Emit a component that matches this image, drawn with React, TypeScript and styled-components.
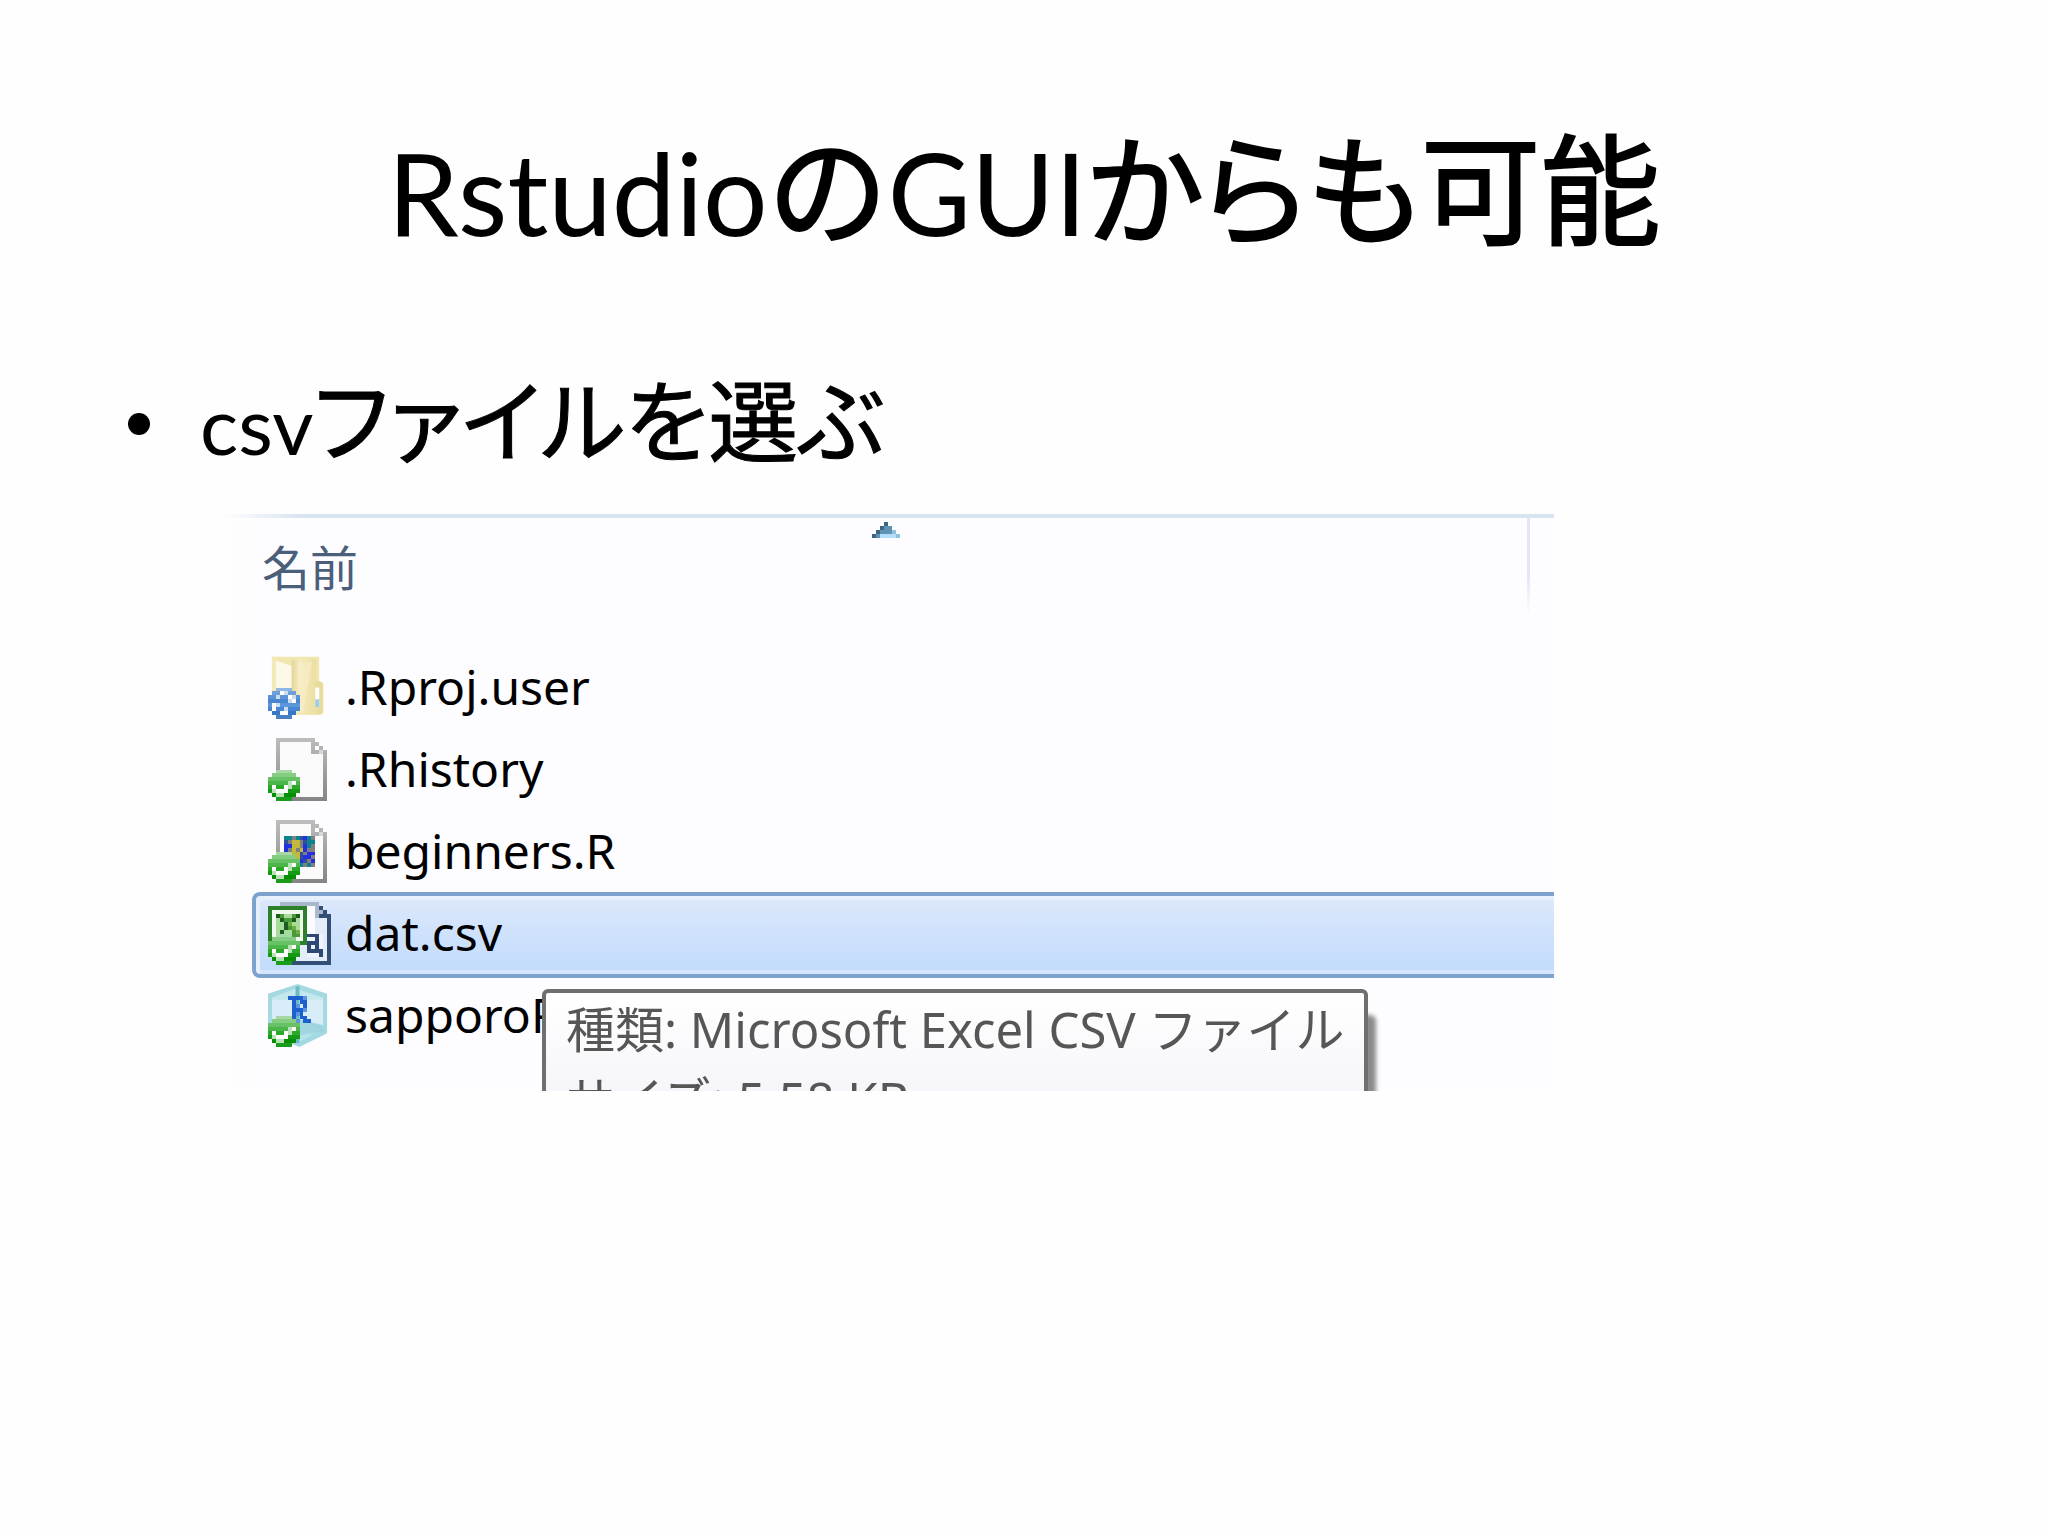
import React from "react";
import styled, { createGlobalStyle } from "styled-components";

const GlobalStyle = createGlobalStyle`
  * {
    box-sizing: border-box;
  }
  body {
    margin: 0;
    background: #fefefe;
    color: #000;
    font-family: Lato, "Noto Sans CJK JP", sans-serif;
  }
`;

const Slide = styled.main`
  display: flex;
  flex-direction: column;
  align-items: stretch;
  padding: 96px 120px 96px;
`;

const Title = styled.h1`
  margin: 0;
  text-align: center;
  font-size: 114px;
  font-weight: 400;
  line-height: 192px;
  white-space: nowrap;
`;

const Japanese = styled.span<{ $size: number; $fullWidth?: boolean }>`
  font-family: "Noto Sans CJK JP", sans-serif;
  font-size: ${(p) => p.$size}px;
  font-weight: 400;
  font-feature-settings: ${(p) => (p.$fullWidth ? "normal" : '"palt"')};
  line-height: 1;
  -webkit-text-stroke: ${(p) => (p.$size > 100 ? 2 : 1)}px currentColor;
`;

const Points = styled.ul`
  list-style: none;
  margin: 64px 0 0;
  padding: 0;
`;

const Point = styled.li`
  display: flex;
  align-items: center;
  gap: 50px;
  padding-left: 8px;
  font-size: 80px;
  line-height: 144px;
  white-space: nowrap;
`;

const Bullet = styled.span`
  width: 22px;
  height: 22px;
  border-radius: 50%;
  background: #000;
`;

const Explorer = styled.section`
  position: relative;
  width: 1330px;
  max-width: 100%;
  height: 577px;
  margin: 18px 0 0 104px;
  overflow: hidden;
  background: linear-gradient(90deg, #fefefe, #fdfcfe 32px);
  font-family: "Noto Sans", "Noto Sans CJK JP", sans-serif;
  font-size: 48px;
`;

const Header = styled.header`
  display: flex;
  align-items: flex-start;
  height: 134px;
  border-top: 4px solid;
  border-image: linear-gradient(90deg, #fefefe, #d9e4f1 80px) 1;
  border-right: 0;
  border-left: 0;
  border-bottom: 0;
`;

const NameColumn = styled.button`
  position: relative;
  flex: 1;
  height: 96px;
  margin: 0;
  padding: 4px 0 0 38px;
  border: 0;
  background: none;
  color: #4b5f7b;
  font: inherit;
  line-height: 80px;
  text-align: left;
`;

const Divider = styled.span`
  width: 3px;
  height: 96px;
  margin-right: 24px;
  background: linear-gradient(#e2e6f5 60%, #fdfcfe);
`;

const SortMark = styled.svg`
  position: absolute;
  top: 4px;
  left: 648px;
  width: 28px;
  height: 16px;
`;

const Files = styled.ul`
  list-style: none;
  margin: 0;
  padding: 0 0 0 28px;
`;

const File = styled.button<{ $selected?: boolean }>`
  display: flex;
  align-items: center;
  gap: 14px;
  width: 100%;
  height: ${(p) => (p.$selected ? 86 : 82)}px;
  margin: ${(p) => (p.$selected ? "-2px 0" : "0")};
  padding: 0 0 4px 12px;
  border: 4px solid ${(p) => (p.$selected ? "#7da2ce" : "transparent")};
  border-right: 0;
  border-radius: 8px 0 0 8px;
  background: ${(p) =>
    p.$selected ? "linear-gradient(#dce8fb, #c1dbfc)" : "none"};
  box-shadow: ${(p) =>
    p.$selected ? "inset 4px 4px #e6effc, inset 0 -4px #d5e6fd" : "none"};
  color: #000;
  font: inherit;
  line-height: 72px;
  text-align: left;
`;

const Icon = styled.svg`
  flex: none;
  width: 63px;
  height: 63px;
`;

const Tooltip = styled.div`
  position: absolute;
  top: 475px;
  left: 318px;
  width: 826px;
  padding: 1px 20px;
  border: 4px solid #6f6f6f;
  border-radius: 6px;
  background: linear-gradient(#fff, #f2f2f8);
  box-shadow: 8px 26px 4px 0 #8c8c8c;
  color: #565656;
  font-size: 49px;
  line-height: 70px;
  white-space: nowrap;
`;

const TooltipLine = styled.p`
  margin: 0;
`;

type Palette = Record<string, string>;

function Pixels({
  rows,
  palette,
  x = 0,
  y = 0,
}: {
  rows: string[];
  palette: Palette;
  x?: number;
  y?: number;
}) {
  return (
    <g shapeRendering="crispEdges">
      {rows.flatMap((row, j) =>
        [...row].map((c, i) =>
          palette[c] ? (
            <rect
              key={`${i}-${j}`}
              x={x + i}
              y={y + j}
              width="1"
              height="1"
              fill={palette[c]}
            />
          ) : null
        )
      )}
    </g>
  );
}

const GREEN = ["#a5d8a3", "#86cd84", "#67c165", "#4cb54a", "#2ba72a", "#149a13", "#068f05", "#1c9c1b"];
const BLUE = ["#8fb6e2", "#6f9fdb", "#5c93d6", "#4a86cf", "#5c96da", "#4786d2", "#3677c6", "#4a80c4"];
const CHECK = ["..####..", ".######.", "########", "#####vw#", "#w##wv##", "#vwww###", ".#vv###.", "..####.."];
const SYNC = ["..####..", ".##wv##.", "##v##wv#", "#####vw#", "#wv#####", "#w##v###", ".##ww##.", "..####.."];

function Badge({
  colors,
  rows,
  tint,
}: {
  colors: string[];
  rows: string[];
  tint: string;
}) {
  return (
    <>
      {rows.map((row, j) => (
        <Pixels
          key={j}
          rows={[row]}
          y={8 + j}
          palette={{ "#": colors[j], w: "#fff", v: tint }}
        />
      ))}
    </>
  );
}

const SyncedBadge = () => <Badge colors={GREEN} rows={CHECK} tint="#b9e2b8" />;
const SyncingBadge = () => <Badge colors={BLUE} rows={SYNC} tint="#c9def5" />;

function Page() {
  return (
    <>
      <defs>
        <linearGradient id="edge" x1="0" y1="0" x2="0" y2="1">
          <stop offset="0" stopColor="#bdbdbd" />
          <stop offset="1" stopColor="#848484" />
        </linearGradient>
      </defs>
      <g shapeRendering="crispEdges">
        <path d="M2 0h10v1h1v1h1v1h1v13H2z" fill="url(#edge)" />
        <path d="M3 1h8v3h3v11H3z" fill="#fafafa" />
        <path d="M12 2h1v1h-1z" fill="#fff" />
        <path d="M13 3h1v1h-1z" fill="#d8d8d8" />
      </g>
    </>
  );
}

function FolderIcon() {
  return (
    <Icon viewBox="0 0 16 16" aria-hidden="true">
      <defs>
        <linearGradient id="cover" x1="0" y1="0" x2="1" y2="0">
          <stop offset="0" stopColor="#e2d49a" />
          <stop offset=".3" stopColor="#f5ebc0" />
          <stop offset="1" stopColor="#ebdf9f" />
        </linearGradient>
      </defs>
      <path d="M1 .2h12v6l1 .8v7.6l-.6.4H8L1 14z" fill="#f0e6ae" />
      <path d="M1.6 1l4.6 1.6V9H1.6z" fill="#fcf9e8" />
      <path d="M1 .2h1V9H1z" fill="#f3eab8" />
      <path d="M6 1.2L7 .6h5.2v13.8L8 15l-2-2z" fill="url(#cover)" />
      <path d="M7.6 1.6h3.6L9 14H8z" fill="#f8efca" opacity=".6" />
      <path d="M12 6.2l2 .6v7.6l-1.6.6z" fill="#e8dc9c" />
      <path d="M12 8h1v5h-1z" fill="#fff" />
      <path d="M12 11h1v2h-1z" fill="#9dcde6" />
      <SyncingBadge />
    </Icon>
  );
}

function BlankIcon() {
  return (
    <Icon viewBox="0 0 16 16" aria-hidden="true">
      <Page />
      <SyncedBadge />
    </Icon>
  );
}

function ScriptIcon() {
  return (
    <Icon viewBox="0 0 16 16" aria-hidden="true">
      <Page />
      <Pixels
        x={4}
        y={4}
        palette={{ g: "#808080", t: "#0b8390", b: "#2330e0", y: "#c2b83c", n: "#30509a" }}
        rows={["ttgtnbtg", "ngyygntt", "bbyygbtg", "bgygybgg", "gbyyngbb", "ggyynbbg", "ggggbngb", "ggggtgtg"]}
      />
      <SyncedBadge />
    </Icon>
  );
}

function CsvIcon() {
  return (
    <Icon viewBox="0 0 16 16" aria-hidden="true">
      <g shapeRendering="crispEdges">
        <path d="M3 0h10v1h1v1h1v1h1v13H3z" fill="#344f74" />
        <path d="M3 0h10v1H3z" fill="#a9b6cb" />
        <path d="M4 1h8v3h3v11H4z" fill="#e3edfa" />
        <path d="M12 1h1v1h1v1h-1v1h-1z" fill="#aab8cd" />
        <path d="M9 1h3v8l-2-1z" fill="#fafcff" />
        <path d="M0 1h10v10H0z" fill="#2b8029" />
        <path d="M1 2h8v8H1z" fill="#f1f9ee" />
        <path d="M2 3h6v6H2z" fill="#a5dc97" />
      </g>
      <Pixels
        x={2}
        y={3}
        palette={{ d: "#1d5b22", m: "#489a3b", l: "#71ad3f" }}
        rows={["dm..md", ".dmmd.", "..dl..", "..dml.", ".d..ml", "dd..mm"]}
      />
      <Pixels
        x={10}
        y={8}
        palette={{ n: "#2f4a72", w: "#eef4fd" }}
        rows={["nnnw", "wwnw", "nnnw", "nwnw", "nnnn", "wwwn"]}
      />
      <SyncedBadge />
    </Icon>
  );
}

function ProjectIcon() {
  return (
    <Icon viewBox="0 0 16 16" aria-hidden="true">
      <path d="M7.5 0L15 2.5v10L8 16 0 13V2.5z" fill="#a4d9e2" />
      <path d="M1 3.4l6-2.2 7 2.2v1L8 5 1 4.2z" fill="#c3e7ec" />
      <path d="M1 4h6v6H1zM8 4h6v6.4L8 9z" fill="#d9edf8" />
      <path d="M8 9.4l6 1.8-6 3.6-3-2z" fill="#b6e2e9" />
      <path d="M7 .6h1V15H7z" fill="#6bb9c5" />
      <path d="M8 9l6 2v1l-6 1z" fill="#8fcfd9" opacity=".6" />
      <Pixels
        x={5}
        y={3}
        palette={{ b: "#1c5fce", c: "#5a95dd" }}
        rows={["bbbbc.", ".b.bb.", ".bc.b.", ".bbbc.", ".bcb..", ".b.bb.", ".bc.bb"]}
      />
      <SyncedBadge />
    </Icon>
  );
}

const files = [
  { name: ".Rproj.user", icon: <FolderIcon /> },
  { name: ".Rhistory", icon: <BlankIcon /> },
  { name: "beginners.R", icon: <ScriptIcon /> },
  { name: "dat.csv", icon: <CsvIcon />, selected: true },
  { name: "sapporoR", icon: <ProjectIcon /> },
];

export default function App() {
  return (
    <>
      <GlobalStyle />
      <Slide>
        <Title>
          Rstudio
          <Japanese $size={120} $fullWidth>
            の
          </Japanese>
          GUI
          <Japanese $size={120}>からも可能</Japanese>
        </Title>
        <Points>
          <Point>
            <Bullet />
            <span>
              csv<Japanese $size={90}>ファイルを選ぶ</Japanese>
            </span>
          </Point>
        </Points>
        <Explorer>
          <Header>
            <NameColumn type="button">
              名前
              <SortMark viewBox="0 0 7 4" aria-hidden="true">
                <Pixels
                  palette={{ d: "#3c6684", m: "#5f93b5", l: "#8fc0de", p: "#b3defa" }}
                  rows={["...d...", "..dmm..", ".dmmml.", "dmppppl"]}
                />
              </SortMark>
            </NameColumn>
            <Divider />
          </Header>
          <Files>
            {files.map((f) => (
              <li key={f.name}>
                <File type="button" $selected={f.selected}>
                  {f.icon}
                  {f.name}
                </File>
              </li>
            ))}
          </Files>
          <Tooltip role="tooltip">
            <TooltipLine>種類: Microsoft Excel CSV ファイル</TooltipLine>
            <TooltipLine>サイズ: 5.58 KB</TooltipLine>
          </Tooltip>
        </Explorer>
      </Slide>
    </>
  );
}
